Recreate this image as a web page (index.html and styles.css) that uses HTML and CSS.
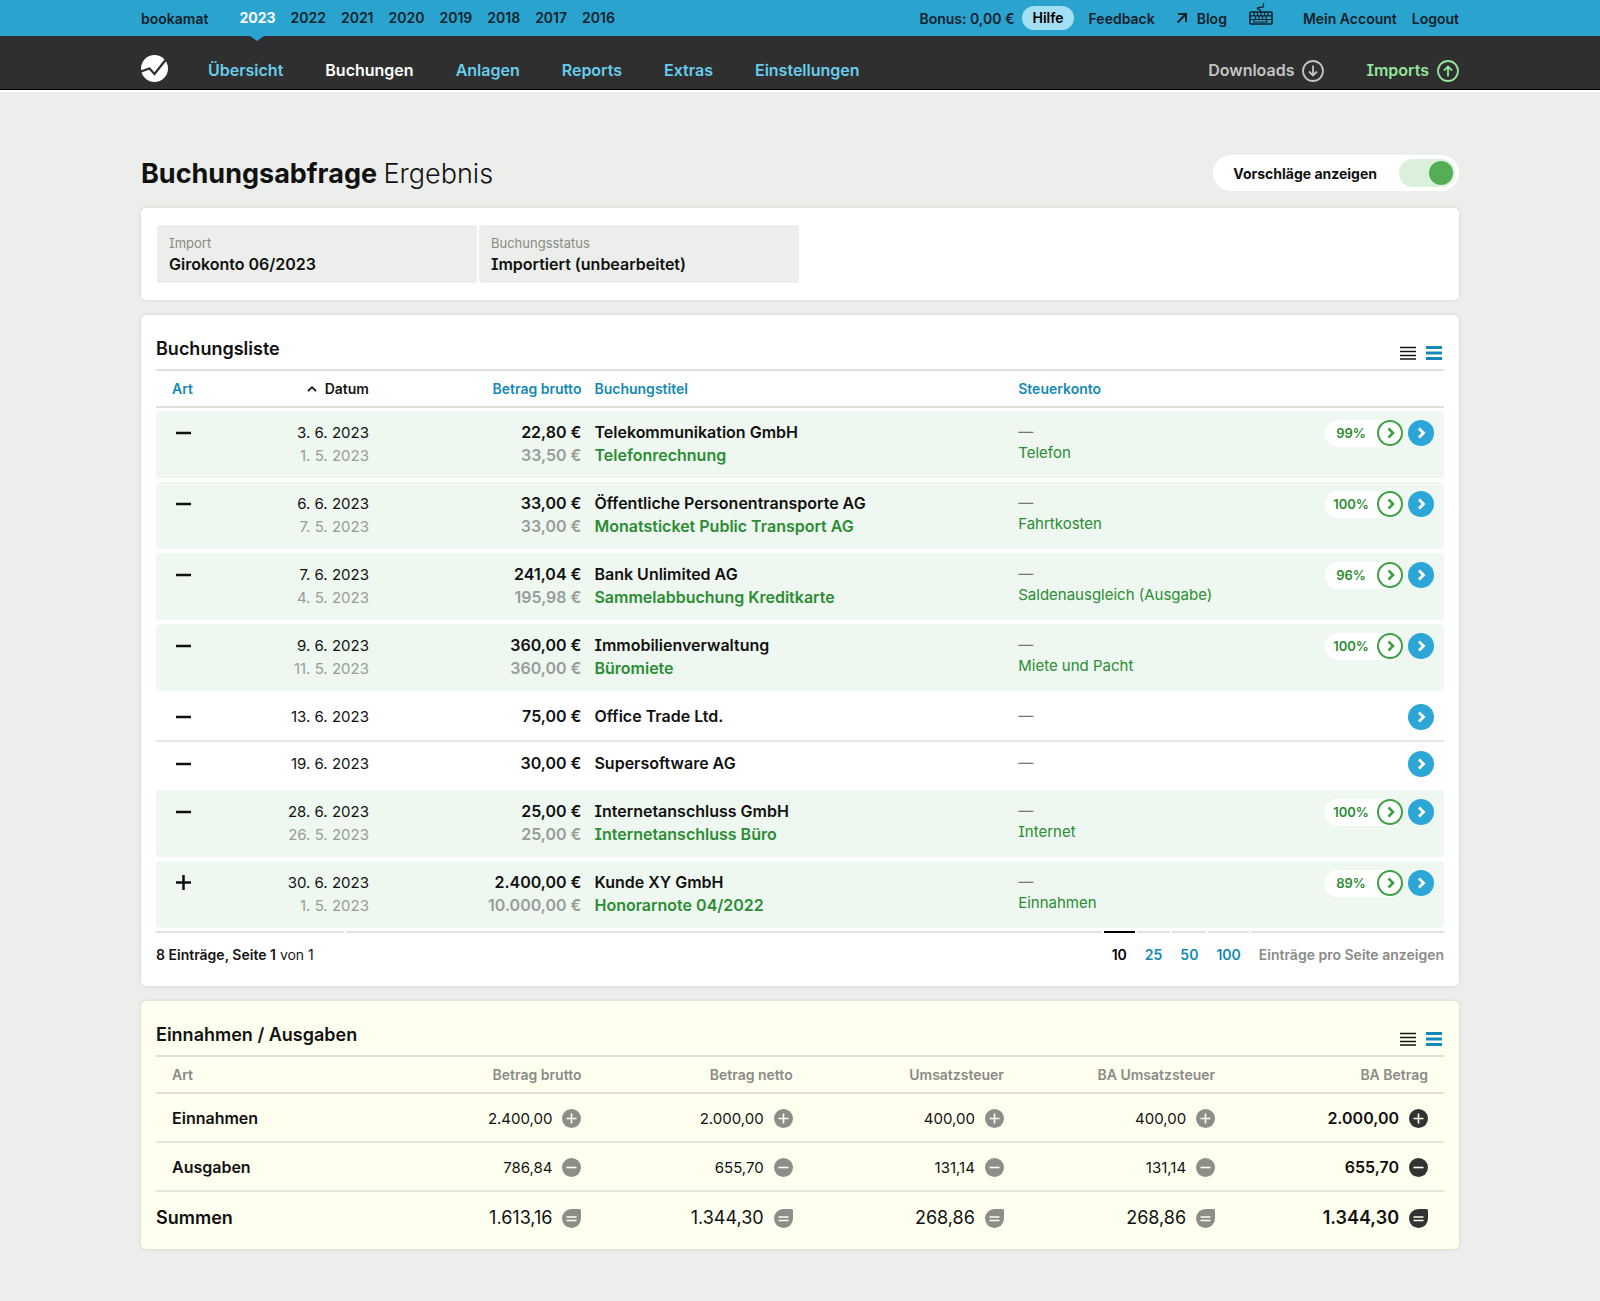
FILE: index.html
```html
<!DOCTYPE html>
<html lang="de">
<head>
    <meta charset="utf-8">
    <meta name="viewport" content="width=device-width, initial-scale=1.0">
    <title>bookamat - Buchungsabfrage</title>
    <link rel="stylesheet" href="styles.css">
</head>
<body>
    <!-- Icons -->
    <svg class="sprite" aria-hidden="true">
        <symbol id="minus" viewBox="0 0 23 23"><path d="M4 12h15" stroke="currentColor" stroke-width="2.5"/></symbol>
        <symbol id="plus" viewBox="0 0 23 23"><path d="M4 11.500h15M11.500 4v15" stroke="currentColor" stroke-width="2.500"/></symbol>
        <symbol id="go" viewBox="0 0 26 26"><circle cx="13" cy="13" r="13" fill="#2ba6d6"/><path d="M11 8.500l4.500 4.500-4.500 4.500" fill="none" stroke="#fff" stroke-width="2.800"/></symbol>
        <symbol id="accept" viewBox="0 0 26 26"><circle cx="13" cy="13" r="12" fill="#fff" stroke="#3d9f43" stroke-width="2"/><path d="M11.500 8.500l4.500 4.500-4.500 4.500" fill="none" stroke="#3d9f43" stroke-width="2.600"/></symbol>
        <symbol id="compact" viewBox="0 0 16 14"><path d="M0 1.500h16M0 5.500h16M0 9.500h16M0 13h16" stroke="currentColor" stroke-width="1.500"/></symbol>
        <symbol id="wide" viewBox="0 0 16 14"><path d="M0 1.500h16M0 7h16M0 12.500h16" stroke="currentColor" stroke-width="2.800"/></symbol>
        <symbol id="sum-plus" viewBox="0 0 19 19"><circle cx="9.500" cy="9.500" r="9.500" fill="currentColor"/><path d="M4.500 9.500h10M9.500 4.500v10" stroke="#fffff0" stroke-width="1.600"/></symbol>
        <symbol id="sum-minus" viewBox="0 0 19 19"><circle cx="9.500" cy="9.500" r="9.500" fill="currentColor"/><path d="M4.500 9.500h10" stroke="#fffff0" stroke-width="1.600"/></symbol>
        <symbol id="sum-equal" viewBox="0 0 19 19"><path d="M9.500 0H17.500Q19 0 19 1.500V9.500A9.500 9.500 0 1 1 9.500 0z" fill="currentColor"/><path d="M4.500 8h10M4.500 11.500h10" stroke="#fffff0" stroke-width="1.600"/></symbol>
    </svg>

    <!-- Obere Leiste -->
    <div class="topbar">
        <div class="container topbar-inner">
            <a class="brand" href="#">bookamat</a>
            <nav class="years" aria-label="Jahr">
                <a class="active" href="#">2023</a>
                <a href="#">2022</a>
                <a href="#">2021</a>
                <a href="#">2020</a>
                <a href="#">2019</a>
                <a href="#">2018</a>
                <a href="#">2017</a>
                <a href="#">2016</a>
            </nav>
            <div class="account">
                <span class="bonus">Bonus: 0,00 €</span>
                <a class="help" href="#">Hilfe</a>
                <a class="feedback" href="#">Feedback</a>
                <a class="blog" href="#">
                    <svg width="12" height="12" viewBox="0 0 12 12"><path d="M2 2h8v8M10 2L1.500 10.500" fill="none" stroke="currentColor" stroke-width="2"/></svg>
                    Blog
                </a>
                <a class="keyboard" href="#" aria-label="Tastenkürzel">
                    <svg width="24" height="22" viewBox="0 0 24 22" fill="none" stroke="currentColor">
                        <path d="M11.500 9V7.500C11.500 5.500 8 7 8.500 5C9 3.500 14.500 5.500 14.500 3V0" stroke-width="1.300"/>
                        <rect x="1" y="9" width="22" height="12" rx="1" stroke-width="1.600"/>
                        <path d="M1 12.800h22M1 16.500h22M5 9v3.800M8.500 9v3.800M12 9v3.800M15.500 9v3.800M19 9v3.800M6.500 12.800v3.700M10 12.800v3.700M13.500 12.800v3.700M17 12.800v3.700M5 16.500V19h13v-2.500" stroke-width="1.200"/>
                    </svg>
                </a>
                <a class="mein-account" href="#">Mein Account</a>
                <a href="#">Logout</a>
            </div>
        </div>
    </div>

    <!-- Hauptnavigation -->
    <header class="mainbar">
        <div class="container mainbar-inner">
            <a class="logo" href="#" aria-label="bookamat">
                <svg width="27" height="27" viewBox="0 0 27 27"><circle cx="13.500" cy="13.500" r="13.500" fill="#fff"/><path d="M0 16.500l8.500-3 5 5.500L24.500 5" fill="none" stroke="#2f2f2f" stroke-width="2.200"/></svg>
            </a>
            <nav class="mainnav" aria-label="Hauptmenü">
                <a href="#">Übersicht</a>
                <a class="active" href="#">Buchungen</a>
                <a href="#">Anlagen</a>
                <a href="#">Reports</a>
                <a href="#">Extras</a>
                <a href="#">Einstellungen</a>
            </nav>
            <div class="transfer">
                <a class="downloads" href="#">Downloads
                    <svg width="22" height="22" viewBox="0 0 22 22" fill="none" stroke="currentColor" stroke-width="1.800"><circle cx="11" cy="11" r="10"/><path d="M11 5.500v10M7 11.500l4 4 4-4"/></svg>
                </a>
                <a class="imports" href="#">Imports
                    <svg width="22" height="22" viewBox="0 0 22 22" fill="none" stroke="currentColor" stroke-width="1.800"><circle cx="11" cy="11" r="10"/><path d="M11 16.500v-10M7 10.500l4-4 4 4"/></svg>
                </a>
            </div>
        </div>
    </header>

    <main class="container">
        <div class="page-head">
            <h1>Buchungsabfrage <span>Ergebnis</span></h1>
            <label class="toggle">
                Vorschläge anzeigen
                <input type="checkbox" role="switch" checked>
            </label>
        </div>

        <!-- Filter -->
        <section class="card filters">
            <div class="filter"><span>Import</span><strong>Girokonto 06/2023</strong></div>
            <div class="filter"><span>Buchungsstatus</span><strong>Importiert (unbearbeitet)</strong></div>
        </section>

        <!-- Buchungsliste -->
        <section class="card list">
            <div class="card-head">
                <h2>Buchungsliste</h2>
                <div class="views">
                    <button type="button" aria-label="Kompakt"><svg><use href="#compact"/></svg></button>
                    <button type="button" class="active" aria-label="Normal"><svg><use href="#wide"/></svg></button>
                </div>
            </div>
            <table class="bookings">
                <thead>
                    <tr>
                        <th class="col-art"><a href="#">Art</a></th>
                        <th class="col-datum num"><a class="sorted" href="#"><svg width="10" height="6" viewBox="0 0 10 6"><path d="M1 5.200l4-4 4 4" fill="none" stroke="currentColor" stroke-width="1.800"/></svg>Datum</a></th>
                        <th class="col-betrag num"><a href="#">Betrag brutto</a></th>
                        <th class="col-titel"><a href="#">Buchungstitel</a></th>
                        <th><a href="#">Steuerkonto</a></th>
                        <th class="col-action"></th>
                    </tr>
                </thead>
                <tbody>
                    <tr class="suggested">
                        <td><svg class="sign"><use href="#minus"/></svg></td>
                        <td class="num">3. 6. 2023<small>1. 5. 2023</small></td>
                        <td class="num amount">22,80 €<small>33,50 €</small></td>
                        <td class="title">Telekommunikation GmbH<small>Telefonrechnung</small></td>
                        <td class="konto">—<small>Telefon</small></td>
                        <td><div class="actions"><a class="match" href="#"><span>99%</span><svg><use href="#accept"/></svg></a><a href="#" aria-label="Öffnen"><svg><use href="#go"/></svg></a></div></td>
                    </tr>
                    <tr class="suggested">
                        <td><svg class="sign"><use href="#minus"/></svg></td>
                        <td class="num">6. 6. 2023<small>7. 5. 2023</small></td>
                        <td class="num amount">33,00 €<small>33,00 €</small></td>
                        <td class="title">Öffentliche Personentransporte AG<small>Monatsticket Public Transport AG</small></td>
                        <td class="konto">—<small>Fahrtkosten</small></td>
                        <td><div class="actions"><a class="match" href="#"><span>100%</span><svg><use href="#accept"/></svg></a><a href="#" aria-label="Öffnen"><svg><use href="#go"/></svg></a></div></td>
                    </tr>
                    <tr class="suggested">
                        <td><svg class="sign"><use href="#minus"/></svg></td>
                        <td class="num">7. 6. 2023<small>4. 5. 2023</small></td>
                        <td class="num amount">241,04 €<small>195,98 €</small></td>
                        <td class="title">Bank Unlimited AG<small>Sammelabbuchung Kreditkarte</small></td>
                        <td class="konto">—<small>Saldenausgleich (Ausgabe)</small></td>
                        <td><div class="actions"><a class="match" href="#"><span>96%</span><svg><use href="#accept"/></svg></a><a href="#" aria-label="Öffnen"><svg><use href="#go"/></svg></a></div></td>
                    </tr>
                    <tr class="suggested">
                        <td><svg class="sign"><use href="#minus"/></svg></td>
                        <td class="num">9. 6. 2023<small>11. 5. 2023</small></td>
                        <td class="num amount">360,00 €<small>360,00 €</small></td>
                        <td class="title">Immobilienverwaltung<small>Büromiete</small></td>
                        <td class="konto">—<small>Miete und Pacht</small></td>
                        <td><div class="actions"><a class="match" href="#"><span>100%</span><svg><use href="#accept"/></svg></a><a href="#" aria-label="Öffnen"><svg><use href="#go"/></svg></a></div></td>
                    </tr>
                    <tr class="plain">
                        <td><svg class="sign"><use href="#minus"/></svg></td>
                        <td class="num">13. 6. 2023</td>
                        <td class="num amount">75,00 €</td>
                        <td class="title">Office Trade Ltd.</td>
                        <td class="konto">—</td>
                        <td><div class="actions"><a href="#" aria-label="Öffnen"><svg><use href="#go"/></svg></a></div></td>
                    </tr>
                    <tr class="plain last">
                        <td><svg class="sign"><use href="#minus"/></svg></td>
                        <td class="num">19. 6. 2023</td>
                        <td class="num amount">30,00 €</td>
                        <td class="title">Supersoftware AG</td>
                        <td class="konto">—</td>
                        <td><div class="actions"><a href="#" aria-label="Öffnen"><svg><use href="#go"/></svg></a></div></td>
                    </tr>
                    <tr class="suggested">
                        <td><svg class="sign"><use href="#minus"/></svg></td>
                        <td class="num">28. 6. 2023<small>26. 5. 2023</small></td>
                        <td class="num amount">25,00 €<small>25,00 €</small></td>
                        <td class="title">Internetanschluss GmbH<small>Internetanschluss Büro</small></td>
                        <td class="konto">—<small>Internet</small></td>
                        <td><div class="actions"><a class="match" href="#"><span>100%</span><svg><use href="#accept"/></svg></a><a href="#" aria-label="Öffnen"><svg><use href="#go"/></svg></a></div></td>
                    </tr>
                    <tr class="suggested">
                        <td><svg class="sign"><use href="#plus"/></svg></td>
                        <td class="num">30. 6. 2023<small>1. 5. 2023</small></td>
                        <td class="num amount">2.400,00 €<small>10.000,00 €</small></td>
                        <td class="title">Kunde XY GmbH<small>Honorarnote 04/2022</small></td>
                        <td class="konto">—<small>Einnahmen</small></td>
                        <td><div class="actions"><a class="match" href="#"><span>89%</span><svg><use href="#accept"/></svg></a><a href="#" aria-label="Öffnen"><svg><use href="#go"/></svg></a></div></td>
                    </tr>
                </tbody>
            </table>
            <div class="pager">
                <div class="entries"><strong>8 Einträge, Seite 1</strong> von 1</div>
                <div class="spacer"></div>
                <a class="active" href="#">10</a>
                <a href="#">25</a>
                <a href="#">50</a>
                <a href="#">100</a>
                <div class="per-page">Einträge pro Seite anzeigen</div>
            </div>
        </section>

        <!-- Summen -->
        <section class="card summary">
            <div class="card-head">
                <h2>Einnahmen / Ausgaben</h2>
                <div class="views">
                    <button type="button" aria-label="Kompakt"><svg><use href="#compact"/></svg></button>
                    <button type="button" class="active" aria-label="Normal"><svg><use href="#wide"/></svg></button>
                </div>
            </div>
            <table class="totals">
                <thead>
                    <tr>
                        <th class="col-label">Art</th>
                        <th class="col-brutto num">Betrag brutto</th>
                        <th class="col-sum num">Betrag netto</th>
                        <th class="col-sum num">Umsatzsteuer</th>
                        <th class="col-sum num">BA Umsatzsteuer</th>
                        <th class="num">BA Betrag</th>
                    </tr>
                </thead>
                <tbody>
                    <tr>
                        <th>Einnahmen</th>
                        <td class="num">2.400,00<svg><use href="#sum-plus"/></svg></td>
                        <td class="num">2.000,00<svg><use href="#sum-plus"/></svg></td>
                        <td class="num">400,00<svg><use href="#sum-plus"/></svg></td>
                        <td class="num">400,00<svg><use href="#sum-plus"/></svg></td>
                        <td class="num">2.000,00<svg><use href="#sum-plus"/></svg></td>
                    </tr>
                    <tr>
                        <th>Ausgaben</th>
                        <td class="num">786,84<svg><use href="#sum-minus"/></svg></td>
                        <td class="num">655,70<svg><use href="#sum-minus"/></svg></td>
                        <td class="num">131,14<svg><use href="#sum-minus"/></svg></td>
                        <td class="num">131,14<svg><use href="#sum-minus"/></svg></td>
                        <td class="num">655,70<svg><use href="#sum-minus"/></svg></td>
                    </tr>
                </tbody>
                <tfoot>
                    <tr>
                        <th>Summen</th>
                        <td class="num">1.613,16<svg><use href="#sum-equal"/></svg></td>
                        <td class="num">1.344,30<svg><use href="#sum-equal"/></svg></td>
                        <td class="num">268,86<svg><use href="#sum-equal"/></svg></td>
                        <td class="num">268,86<svg><use href="#sum-equal"/></svg></td>
                        <td class="num">1.344,30<svg><use href="#sum-equal"/></svg></td>
                    </tr>
                </tfoot>
            </table>
        </section>
    </main>
</body>
</html>
```
FILE: styles.css
```css
* {
    box-sizing: border-box;
}
body {
    margin: 0;
    font-family: Inter, sans-serif;
    font-size: 15px;
    line-height: 23px;
    color: #111;
    background: #ebeeea;
    font-feature-settings: "cv08";
}
a {
    color: inherit;
    text-decoration: none;
}
svg {
    display: block;
    flex: none;
}
.sprite {
    position: absolute;
    width: 0;
    height: 0;
}
.container {
    max-width: 1350px;
    margin: 0 auto;
    padding: 0 16px;
}

/* Obere Leiste */
.topbar {
    background: #2aa3cf;
    font-size: 14px;
    font-weight: 600;
    color: #12222b;
}
.topbar-inner {
    display: flex;
    align-items: center;
    height: 36px;
}
.years {
    display: flex;
    gap: 15px;
    margin-left: 31px;
}
.years a {
    position: relative;
    line-height: 36px;
}
.years .active {
    color: #fff;
    font-weight: 700;
}
.years .active::after {
    content: "";
    position: absolute;
    top: 100%;
    left: 50%;
    margin-left: -7px;
    border: 7px solid transparent;
    border-top: 5px solid #2aa3cf;
    border-bottom: 0;
}
.account {
    display: flex;
    align-items: center;
    margin-left: auto;
}
.help {
    margin: 0 15px 0 8px;
    padding: 0 10px;
    border-radius: 12px;
    line-height: 24px;
    background: #a3dff3;
    color: #000;
}
.blog {
    display: flex;
    align-items: center;
    gap: 9px;
    margin-left: 21px;
}
.keyboard {
    margin: 0 30px 8px 22px;
}
.mein-account {
    margin-right: 15px;
}

/* Hauptnavigation */
.mainbar {
    background: #2f2f2f;
    border-bottom: 1px solid #000;
    box-shadow: 0 2px 0 #fff;
    font-size: 16px;
    font-weight: 600;
}
.mainbar-inner {
    display: flex;
    align-items: center;
    height: 53px;
    padding-top: 16px;
}
.logo {
    margin-bottom: 5px;
}
.mainnav {
    display: flex;
    gap: 42px;
    margin-left: 40px;
    color: #68cdec;
}
.mainnav .active {
    color: #fff;
}
.transfer {
    display: flex;
    gap: 42px;
    margin-left: auto;
}
.transfer a {
    display: flex;
    align-items: center;
    gap: 8px;
}
.downloads {
    color: #c4c4c4;
}
.imports {
    color: #93e59b;
}

/* Titel */
.page-head {
    display: flex;
    justify-content: space-between;
    align-items: center;
    margin: 65px 0 17px;
}
h1 {
    margin: 0;
    padding-top: 2px;
    font-size: 27px;
    line-height: 34px;
    font-weight: 700;
}
h1 span {
    font-weight: 300;
}
.toggle {
    display: flex;
    align-items: center;
    gap: 22px;
    height: 36px;
    padding: 0 4px 0 20px;
    border-radius: 18px;
    background: #fff;
    font-size: 14px;
    font-weight: 700;
    cursor: pointer;
}
.toggle input {
    appearance: none;
    display: flex;
    width: 56px;
    height: 28px;
    margin: 0;
    padding: 2px;
    border-radius: 14px;
    background: #ddd;
}
.toggle input::before {
    content: "";
    width: 24px;
    height: 24px;
    border-radius: 50%;
    background: #999;
}
.toggle input:checked {
    justify-content: flex-end;
    background: #daf0da;
}
.toggle input:checked::before {
    background: #55ad56;
}

/* Karten */
.card {
    margin-bottom: 15px;
    padding: 0 15px;
    border-radius: 5px;
    background: #fff;
    box-shadow: 0 0 3px 1px #dcded6;
}
.filters {
    display: flex;
    gap: 2px;
    padding: 17px 16px;
}
.filter {
    width: 320px;
    padding: 8px 12px;
    border-radius: 3px;
    background: #ebeeea;
    line-height: 21px;
}
.filter span {
    display: block;
    font-size: 13px;
    color: #8a8b86;
}
.filter strong {
    display: block;
    font-size: 16px;
    font-weight: 600;
}
.card-head {
    display: flex;
    justify-content: space-between;
    align-items: center;
    height: 54px;
    padding-top: 12px;
}
h2 {
    margin: 0;
    font-size: 18px;
    font-weight: 600;
}
.views {
    display: flex;
    gap: 10px;
    padding: 10px 2px 0 0;
}
.views button {
    padding: 0;
    border: none;
    background: none;
    color: #151515;
    cursor: pointer;
}
.views .active {
    color: #1489bb;
}
.views svg {
    width: 16px;
    height: 14px;
}

/* Tabellen */
table {
    width: 100%;
    table-layout: fixed;
    border-spacing: 0;
}
th, td {
    padding: 0 6px 0 7px;
    text-align: left;
    vertical-align: top;
}
th:first-child, td:first-child {
    padding-left: 16px;
}
.num {
    text-align: right;
}
thead th {
    height: 39px;
    border: 0 solid #dfe0da;
    border-width: 2px 0;
    vertical-align: middle;
    font-size: 14px;
    font-weight: 600;
    color: #8a8b86;
}
.bookings thead {
    color: #1489b5;
}
.bookings thead th {
    color: inherit;
}
.sorted {
    display: inline-flex;
    align-items: center;
    gap: 8px;
    vertical-align: top;
    color: #151515;
}
.col-art {
    width: 8%;
}
.col-datum {
    width: 9%;
}
.col-betrag {
    width: 16.5%;
}
.col-titel {
    width: 32.9%;
}
.col-action {
    width: 130px;
}
.bookings td {
    padding-top: 10px;
}
.bookings td:last-child {
    padding: 9px 10px 0 0;
}
.bookings small {
    display: block;
    font-size: inherit;
    color: #999c98;
}
.bookings .amount, .bookings .title {
    font-size: 16px;
    font-weight: 600;
}
.title small, .bookings .konto small {
    color: #2b8c33;
}
.bookings .title small {
    color: #2b8c33;
}
.bookings .konto {
    line-height: 21px;
    color: #777;
}
.sign {
    width: 23px;
    height: 23px;
}
.suggested td {
    height: 71px;
    border-bottom: 4px solid transparent;
    background: #eef8f0;
    background-clip: padding-box;
}
.suggested td:first-child {
    border-radius: 4px 0 0 4px / 4px 0 0 8px;
}
.suggested td:last-child {
    border-radius: 0 4px 4px 0 / 0 4px 8px 0;
}
.bookings tbody::before {
    content: "";
    display: block;
    height: 3px;
}
.plain td {
    height: 47px;
    border-bottom: 2px solid #e6e7e3;
}
.plain.last td {
    height: 48px;
    border-color: transparent;
}
.actions {
    display: flex;
    justify-content: flex-end;
    gap: 5px;
}
.actions svg {
    width: 26px;
    height: 26px;
}
.match {
    display: flex;
    border-radius: 13px;
    background: #fff;
    font-size: 13px;
    font-weight: 600;
    line-height: 27px;
    color: #2b8c33;
}
.match span {
    width: 52px;
    text-align: center;
}

/* Fusszeile der Liste */
.list {
    padding-bottom: 20px;
}
.pager {
    display: flex;
    gap: 2px;
    margin-top: -1px;
    font-size: 14px;
    font-weight: 600;
    color: #1489b5;
}
.pager > * {
    padding: 10px 8px 0;
    border-top: 2px solid #e2e3e0;
}
.pager .active {
    border-color: #000;
    color: #000;
}
.pager .entries {
    padding: 10px 30px 0 0;
    font-weight: 400;
    color: #151515;
}
.entries strong {
    font-weight: 600;
}
.pager .spacer {
    flex: 1;
}
.pager .per-page {
    padding-right: 0;
    color: #8a8b86;
}

/* Summen */
.summary {
    padding-bottom: 7px;
    background: #fffff0;
}
.col-label {
    width: 17%;
}
.col-brutto {
    width: 16.5%;
}
.col-sum {
    width: 16.4%;
}
.totals tr > :last-child {
    padding-right: 16px;
}
.totals tbody th, .totals tbody td {
    height: 49px;
    padding-top: 2px;
    border-bottom: 2px solid #e6e7dc;
    vertical-align: middle;
}
.totals tbody th, .totals tbody td:last-child {
    font-size: 16px;
    font-weight: 600;
}
.totals td svg {
    display: inline-block;
    width: 19px;
    height: 19px;
    margin-left: 10px;
    vertical-align: -4px;
    color: #8e8e88;
}
.totals td:last-child svg {
    color: #333;
}
.totals tfoot th, .totals tfoot td {
    height: 50px;
    vertical-align: middle;
    font-size: 18px;
}
.totals tfoot th, .totals tfoot td:last-child {
    font-weight: 600;
}
.totals tfoot th {
    padding-left: 0;
}
```
